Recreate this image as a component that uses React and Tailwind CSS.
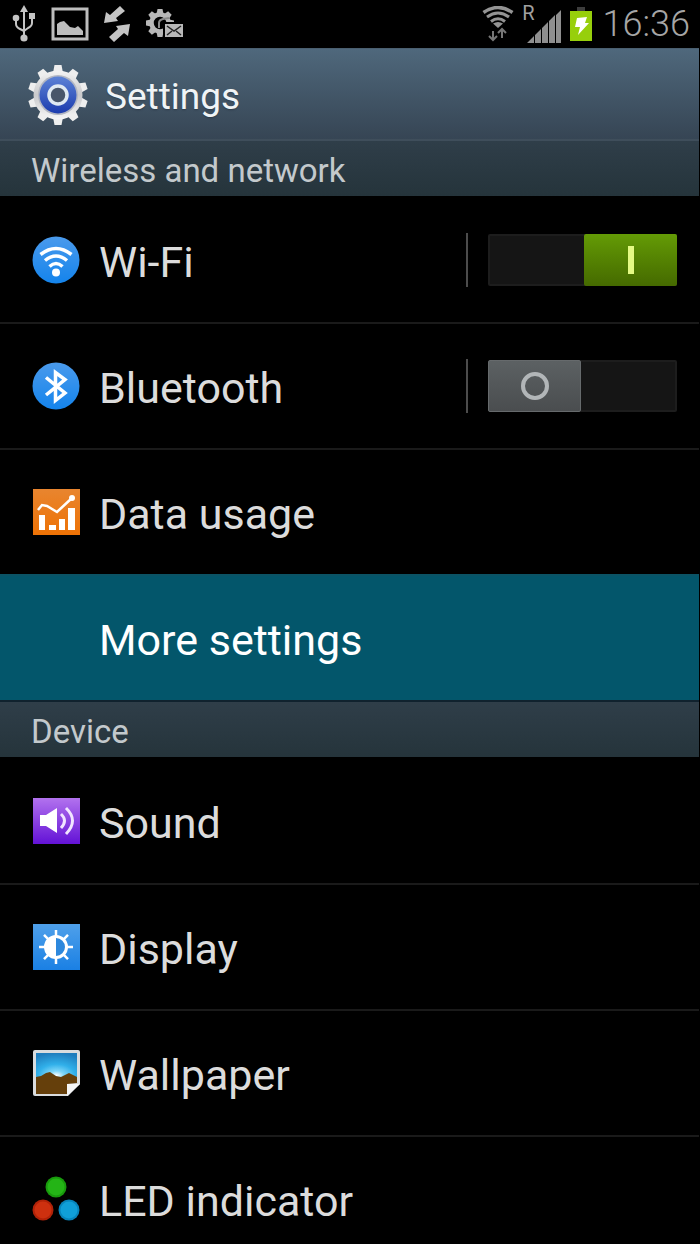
import React, { useState } from 'react'

const GEAR_TEETH = [0, 36, 72, 108, 144, 180, 216, 252, 288, 324]
const EIGHTHS = [0, 45, 90, 135, 180, 225, 270, 315]

function UsbIcon() {
  return (
    <svg width="26" height="38" viewBox="0 0 26 38" fill="none" stroke="#c4c4c4" strokeWidth="2" aria-hidden="true">
      <path d="M13 5v27M5 13v6q0 3 4 5l4 2M21 12v6q0 3-4 5l-4 3" />
      <path d="M13 0l4 7H9z" fill="#c4c4c4" stroke="none" />
      <circle cx="5" cy="13" r="3.3" fill="#c4c4c4" stroke="none" />
      <path d="M18 8h6v6h-6z" fill="#c4c4c4" stroke="none" />
      <circle cx="13" cy="33" r="3.6" fill="#c4c4c4" stroke="none" />
    </svg>
  )
}

function PictureIcon() {
  return (
    <svg width="38" height="34" viewBox="0 0 38 34" aria-hidden="true">
      <rect x="2" y="2" width="34" height="30" fill="none" stroke="#bdbdbd" strokeWidth="3" />
      <path d="M6 28V17l3-2 4-1 6 6 5 1 3-2 4 4 1 1v4z" fill="#bdbdbd" />
    </svg>
  )
}

function SyncIcon() {
  return (
    <svg width="28" height="36" viewBox="0 0 28 36" fill="#c4c4c4" aria-hidden="true">
      <path d="M17 0l5 5-9 7 2 3-14 2L3 6l4 3z" />
      <path d="M11 36l-5-5 9-8-2-3 14-2-2 12-4-3z" />
    </svg>
  )
}

function GearMailIcon() {
  return (
    <svg width="40" height="32" viewBox="0 0 40 32" aria-hidden="true">
      <g fill="#b8b8b8">
        {EIGHTHS.map((a) => (
          <path key={a} d="M12.5 1h5l1 5h-7z" transform={`rotate(${a} 15 15)`} />
        ))}
      </g>
      <circle cx="15" cy="15" r="8.5" fill="none" stroke="#b8b8b8" strokeWidth="4.5" />
      <path d="M14 20v-5q0-3 4-4l6-1" fill="none" stroke="#8a8a8a" strokeWidth="2" />
      <rect x="18" y="14" width="21" height="16" fill="#000" />
      <rect x="20" y="16" width="18" height="13" fill="#b8b8b8" />
      <path d="M22 18l7 5 7-5M22 27l5-4M36 27l-5-4" fill="none" stroke="#222" strokeWidth="1.5" />
    </svg>
  )
}

function WifiStatusIcon() {
  return (
    <svg width="32" height="36" viewBox="0 0 32 36" fill="none" stroke="#949494" aria-hidden="true">
      <path d="M1.5 6.5q14.5-10 29 0" strokeWidth="3.5" />
      <path d="M5 11q11-8 22 0" strokeWidth="3" />
      <path d="M9 15.5q7-5.5 14 0" strokeWidth="3" />
      <path d="M11 17.5q5-3 10 0L16 22z" fill="#949494" stroke="none" />
      <path d="M11 25v8M7 30l4 4 4-4" stroke="#777" strokeWidth="2" />
      <path d="M20 32v-9M16 27l4-4 4 4" stroke="#777" strokeWidth="2" />
    </svg>
  )
}

function SignalIcon() {
  return (
    <svg width="34" height="33" viewBox="0 0 34 33" fill="#8f8f8f" aria-hidden="true">
      <path d="M0 33l7-7v7zM8 25l6-6v14H8zM15 18l6-6v21h-6zM22 11l6-6v28h-6zM29 5l5-5v33h-5z" />
    </svg>
  )
}

function BatteryIcon() {
  return (
    <svg width="24" height="36" viewBox="0 0 24 36" aria-hidden="true">
      <rect x="8" y="1" width="8" height="4" fill="#3d3d3d" />
      <rect x="1" y="5" width="22" height="30" fill="#97cf0c" />
      <path d="M8 12l10-1-2 6h4L9 29l2-8H6z" fill="#fff" />
    </svg>
  )
}

function SettingsLogo() {
  return (
    <svg width="62" height="62" viewBox="0 0 62 62" aria-hidden="true">
      <defs>
        <linearGradient id="gearBody" x1="0" y1="0" x2="0" y2="1">
          <stop offset="0" stopColor="#f4f4f4" />
          <stop offset="0.5" stopColor="#c9c9cb" />
          <stop offset="1" stopColor="#f7f7f7" />
        </linearGradient>
        <linearGradient id="gearBlue" x1="0" y1="0" x2="0" y2="1">
          <stop offset="0" stopColor="#5c82d6" />
          <stop offset="1" stopColor="#1c3cae" />
        </linearGradient>
      </defs>
      <g fill="#eeeeee">
        {GEAR_TEETH.map((a) => (
          <path key={a} d="M27.5 1h7l1.5 8H26z" transform={`rotate(${a} 31 31)`} />
        ))}
      </g>
      <circle cx="31" cy="31" r="24.5" fill="url(#gearBody)" />
      <circle cx="31" cy="31" r="20" fill="#b3b7c2" />
      <circle cx="31" cy="31" r="18.5" fill="url(#gearBlue)" />
      <circle cx="31" cy="31" r="9" fill="#48566a" stroke="#dfe9f2" strokeWidth="3.5" />
    </svg>
  )
}

function WifiIcon() {
  return (
    <svg width="48" height="48" viewBox="0 0 48 48" aria-hidden="true">
      <defs>
        <linearGradient id="wifiBlue" x1="0" y1="0" x2="0" y2="1">
          <stop offset="0" stopColor="#4a9aec" />
          <stop offset="1" stopColor="#1484ec" />
        </linearGradient>
      </defs>
      <circle cx="24" cy="24" r="23.5" fill="url(#wifiBlue)" />
      <g fill="none" stroke="#fff" strokeWidth="3.5">
        <path d="M8.5 18.5Q24 6.500 39.500 18.500" />
        <path d="M13 24.5Q24 15.5 35 24.5" />
        <path d="M17.5 30.5Q24 24.5 30.5 30.5" />
      </g>
      <circle cx="24" cy="36.5" r="4" fill="#fff" />
    </svg>
  )
}

function BluetoothIcon() {
  return (
    <svg width="48" height="48" viewBox="0 0 48 48" aria-hidden="true">
      <defs>
        <linearGradient id="btBlue" x1="0" y1="0" x2="0" y2="1">
          <stop offset="0" stopColor="#4a9aec" />
          <stop offset="1" stopColor="#1484ec" />
        </linearGradient>
      </defs>
      <circle cx="24" cy="24" r="23.5" fill="url(#btBlue)" />
      <path d="M14 15.5L33 31l-9.5 7.5v-28L33 17.5 14 33" fill="none" stroke="#fff" strokeWidth="3.5" />
    </svg>
  )
}

function DataUsageIcon() {
  return (
    <svg width="48" height="48" viewBox="0 0 48 48" aria-hidden="true">
      <defs>
        <linearGradient id="dataOrange" x1="0" y1="0" x2="0" y2="1">
          <stop offset="0" stopColor="#e8852f" />
          <stop offset="1" stopColor="#ee7205" />
        </linearGradient>
      </defs>
      <rect x="1" y="1" width="47" height="46" fill="url(#dataOrange)" />
      <path d="M6 22l4-5 5 1 10 6L40 10" fill="none" stroke="#fff" strokeWidth="2.5" />
      <circle cx="40" cy="10" r="3" fill="#fff" />
      <path d="M7 27h6v15H7zM17 37h7v5h-7zM27 31h6v11h-6zM36 20h7v22h-7z" fill="#fff" />
    </svg>
  )
}

function SoundIcon() {
  return (
    <svg width="48" height="48" viewBox="0 0 48 48" aria-hidden="true">
      <defs>
        <linearGradient id="soundPurple" x1="0" y1="0" x2="0" y2="1">
          <stop offset="0" stopColor="#b272ee" />
          <stop offset="1" stopColor="#6312d6" />
        </linearGradient>
      </defs>
      <rect x="1" y="1" width="47" height="46" fill="url(#soundPurple)" />
      <path d="M8 18h6l11-7v25l-11-7H8z" fill="#fff" />
      <path d="M29 17q7 6.5 0 14M34 11q13 12.5 0 26" fill="none" stroke="#f1e4ff" strokeWidth="3" />
    </svg>
  )
}

function DisplayIcon() {
  return (
    <svg width="48" height="48" viewBox="0 0 48 48" aria-hidden="true">
      <defs>
        <linearGradient id="displayBlue" x1="0" y1="0" x2="0" y2="1">
          <stop offset="0" stopColor="#4fa0ea" />
          <stop offset="1" stopColor="#1a80e4" />
        </linearGradient>
      </defs>
      <rect x="1" y="1" width="47" height="46" fill="url(#displayBlue)" />
      <g stroke="#fff" strokeWidth="2.5">
        {EIGHTHS.map((a) => (
          <path key={a} d="M24 7v7" transform={`rotate(${a} 24 24)`} />
        ))}
      </g>
      <circle cx="24" cy="24" r="10.5" fill="#2d88dd" stroke="#fff" strokeWidth="3" />
      <path d="M24 13a11 11 0 0 0 0 22z" fill="#fff" />
    </svg>
  )
}

function WallpaperIcon() {
  return (
    <svg width="48" height="48" viewBox="0 0 48 48" aria-hidden="true">
      <defs>
        <radialGradient id="sky" cx="0.5" cy="0.9" r="0.9">
          <stop offset="0" stopColor="#ffffff" />
          <stop offset="0.2" stopColor="#7fd6f8" />
          <stop offset="0.5" stopColor="#31b0ea" />
          <stop offset="1" stopColor="#1f7dbd" />
        </radialGradient>
      </defs>
      <path d="M3 1h43q2 0 2 2v32L36 47H3q-2 0-2-2V3q0-2 2-2z" fill="#d9dcde" />
      <path d="M4 4h41v25H4z" fill="url(#sky)" />
      <path d="M4 28l5-1 5-3 4-1 6 4 5 1 8-4 8 4v6l-10 1v10H4z" fill="#653f0b" />
      <path d="M35 35h13L35 47z" fill="#f5f5f5" />
    </svg>
  )
}

function LedIcon() {
  return (
    <svg width="48" height="48" viewBox="0 0 48 48" aria-hidden="true">
      <circle cx="24" cy="12" r="10.5" fill="#189a0c" />
      <circle cx="24" cy="12" r="8.5" fill="#24b416" />
      <circle cx="11" cy="35" r="10.5" fill="#b02208" />
      <circle cx="11" cy="35" r="8.5" fill="#cd300f" />
      <circle cx="37" cy="35" r="10.5" fill="#0784bb" />
      <circle cx="37" cy="35" r="8.5" fill="#109fd8" />
    </svg>
  )
}

function Toggle({ label, checked, onChange }) {
  return (
    <div className="flex items-center gap-5 pr-[22px]">
      <span className="w-0.5 h-[54px] bg-[#4c4c4c]" />
      <div className="relative h-[52px]">
        <input
          type="checkbox"
          role="switch"
          aria-label={label}
          checked={checked}
          onChange={(e) => onChange(e.target.checked)}
          className="block appearance-none w-[189px] h-[52px] rounded-xs border-2 border-[#1d1d1d] bg-[#151515]"
        />
        {checked ? (
          <span className="pointer-events-none absolute right-0 top-0 flex h-[52px] w-[93px] items-center justify-center rounded-xs bg-linear-to-b from-[#649b06] to-[#456a00]">
            <span className="h-7 w-1.5 bg-[#e4fa84]" />
          </span>
        ) : (
          <span className="pointer-events-none absolute left-0 top-0 flex h-[52px] w-[93px] items-center justify-center rounded-xs border border-[#666a6c] bg-linear-to-b from-[#5c6163] to-[#4a4d4f]">
            <span className="size-7 rounded-full border-4 border-[#b2b6b8]" />
          </span>
        )}
      </div>
    </div>
  )
}

function SectionTitle({ children }) {
  return (
    <h2 className="flex h-[57px] items-center border-t-2 border-[#10222e] bg-linear-to-b from-[#2f3e49] to-[#25343b] px-[31px] pt-1 text-[33px] text-[#c3c9cc] first:border-[#3f4e5b]">
      {children}
    </h2>
  )
}

function Row({ icon, label, selected, first, children }) {
  const color = selected
    ? 'bg-[#03566b] text-white border-[#0b5365]'
    : `bg-black text-[#dcdcdc] ${first ? 'border-black' : 'border-[#1a1a1a]'}`
  return (
    <li className={`flex h-[126px] items-center border-t-2 ${color}`}>
      <button className="flex h-full min-w-0 flex-1 items-center gap-[19px] pl-8 text-left">
        <span className="size-12 shrink-0">{icon}</span>
        <span className="pt-1 text-[43px]">{label}</span>
      </button>
      {children}
    </li>
  )
}

export default function App() {
  const [wifi, setWifi] = useState(true)
  const [bluetooth, setBluetooth] = useState(false)

  return (
    <div className="flex h-screen flex-col bg-black pr-px font-['Roboto',sans-serif]">
      <div className="flex h-12 shrink-0 items-center justify-between pl-[11px] pr-[9px]">
        <div className="flex items-center gap-3.5">
          <UsbIcon />
          <PictureIcon />
          <SyncIcon />
          <GearMailIcon />
        </div>
        <div className="flex items-center">
          <WifiStatusIcon />
          <span className="ml-2 self-start pt-1.5 text-[20px] leading-5 text-[#a0a0a0]">R</span>
          <span className="-ml-2 pt-1"><SignalIcon /></span>
          <span className="ml-2"><BatteryIcon /></span>
          <span className="ml-2.5 text-[36px] font-light text-[#a6a6a6]">16:36</span>
        </div>
      </div>

      <header className="flex h-[91px] shrink-0 items-center gap-4 border-t border-[#4a5f70] bg-linear-to-b from-[#4f687c] to-[#364554] pl-[27px] pt-0.5">
        <SettingsLogo />
        <h1 className="pt-1 text-[37px] text-[#f0f4f6] text-shadow-sm">Settings</h1>
      </header>

      <main className="min-h-0 flex-1 overflow-y-auto [scrollbar-width:none]">
        <SectionTitle>Wireless and network</SectionTitle>
        <ul>
          <Row first icon={<WifiIcon />} label="Wi-Fi">
            <Toggle label="Wi-Fi" checked={wifi} onChange={setWifi} />
          </Row>
          <Row icon={<BluetoothIcon />} label="Bluetooth">
            <Toggle label="Bluetooth" checked={bluetooth} onChange={setBluetooth} />
          </Row>
          <Row icon={<DataUsageIcon />} label="Data usage" />
          <Row selected label="More settings" />
        </ul>
        <SectionTitle>Device</SectionTitle>
        <ul>
          <Row first icon={<SoundIcon />} label="Sound" />
          <Row icon={<DisplayIcon />} label="Display" />
          <Row icon={<WallpaperIcon />} label="Wallpaper" />
          <Row icon={<LedIcon />} label="LED indicator" />
        </ul>
      </main>
    </div>
  )
}
